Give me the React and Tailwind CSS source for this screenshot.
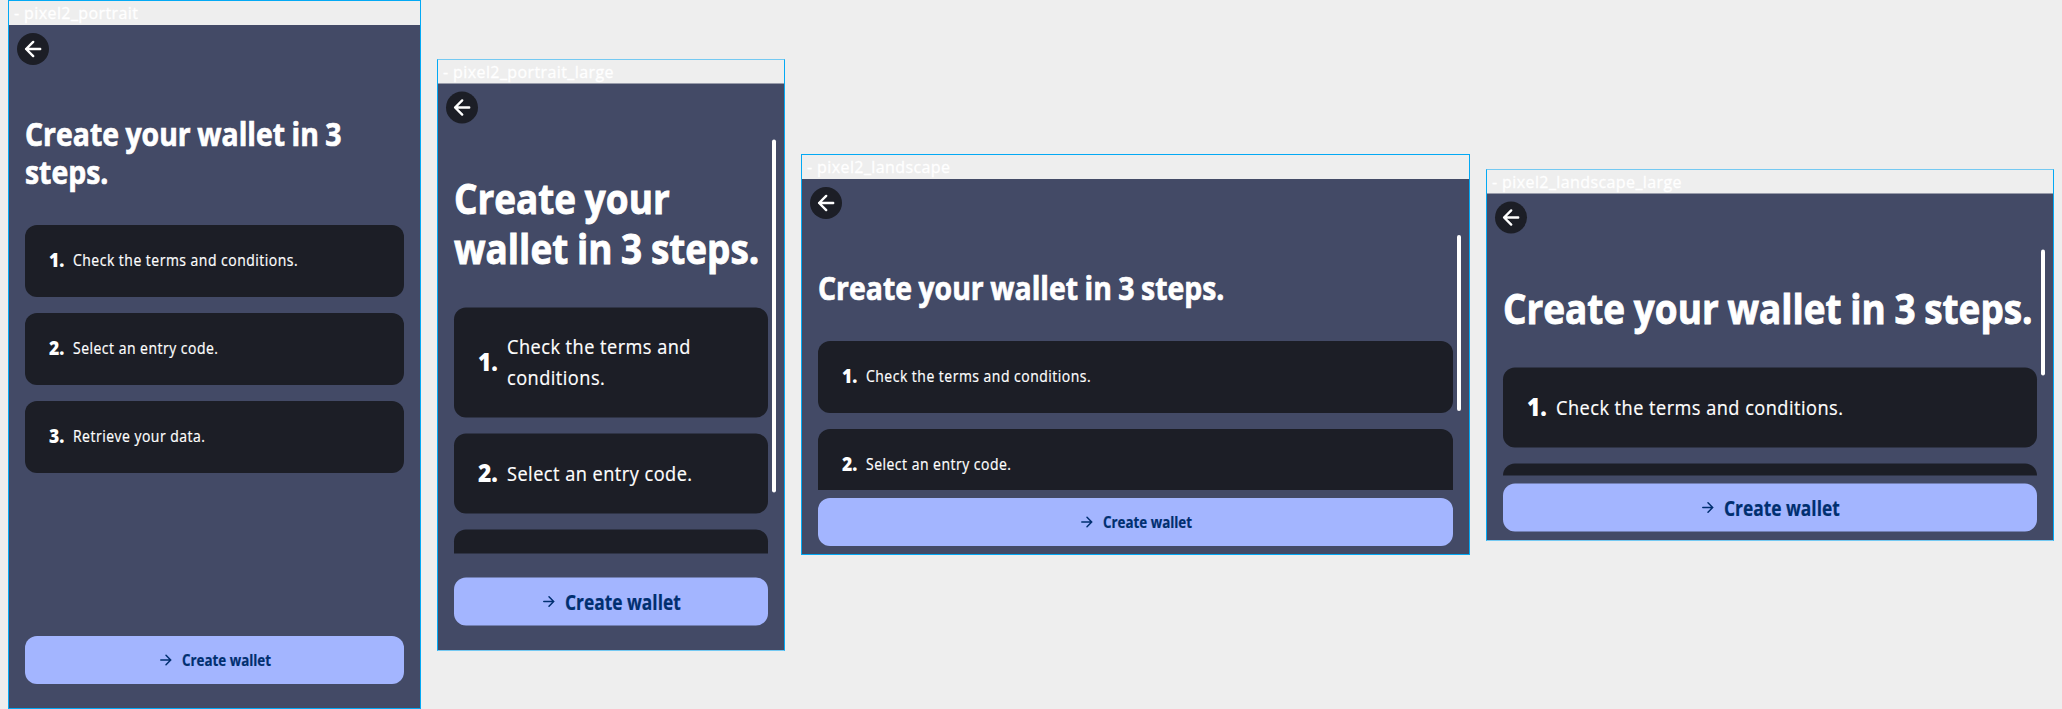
import React from 'react';

const STEPS = ['Check the terms and conditions.', 'Select an entry code.', 'Retrieve your data.'];

const SIZES = {
  regular: {
    offset: '',
    label: 'h-6',
    heading: 'mt-[34px] mb-[34px] text-[32px] leading-[38px] [word-spacing:-1px] [-webkit-text-stroke:0.7px_white]',
    number: 'w-6 text-[18.5px] leading-6',
    step: 'text-[16px] leading-6 tracking-[0.57px] [-webkit-text-stroke:0.2px_white]',
    button: 'w-[89px] text-[16px] leading-6',
    edge: 'border-y-[#03a9f4]',
  },
  large: {
    offset: 'translate-y-[0.5px]',
    label: 'h-[23px]',
    heading: 'mt-[33px] mb-[35px] text-[41.6px] leading-[50px] [word-spacing:-1px] [-webkit-text-stroke:0.9px_white]',
    number: 'w-[29px] text-[24px] leading-8',
    step: 'text-[20.8px] leading-[31px] tracking-[0.55px] [-webkit-text-stroke:0.2px_white]',
    button: 'w-[115.5px] text-[20.8px] leading-8',
    edge: 'border-y-[#74c9f2]',
  },
};

const DEVICES = [
  { name: 'pixel2_portrait', size: 'regular', frame: 'w-[413px] h-[709px]', footer: 'py-6', bar: null },
  { name: 'pixel2_portrait_large', size: 'large', frame: 'w-[348px] h-[592px] mb-[-1px]', footer: 'pt-6 pb-[25px]', bar: 'h-[353px]' },
  { name: 'pixel2_landscape', size: 'regular', frame: 'w-[669px] h-[401px]', footer: 'py-2', bar: 'h-[176px]' },
  { name: 'pixel2_landscape_large', size: 'large', frame: 'w-[568px] h-[372px] mb-[-1px]', footer: 'pt-2 pb-[9px]', bar: 'h-[126px]' },
];

function BackIcon() {
  return (
    <svg className="size-5" viewBox="0 0 20 20" fill="none" stroke="currentColor" strokeWidth="2.4" strokeLinecap="round" strokeLinejoin="round">
      <path d="M10.2 2.9 3.1 10l7.1 7.1M3.1 10h14.1" />
    </svg>
  );
}

function ForwardIcon() {
  return (
    <svg className="size-4 shrink-0" viewBox="0 0 16 16" fill="none" stroke="currentColor" strokeWidth="1.5" strokeLinecap="round" strokeLinejoin="round">
      <path d="M2.8 8h10M8 3.3 12.7 8 8 12.7" />
    </svg>
  );
}

function Device({ name, size, frame, footer, bar }) {
  const s = SIZES[size];
  return (
    <section className={`flex shrink-0 flex-col overflow-hidden border border-x-[#03a9f4] ${s.edge} ${frame}`}>
      <p className={`shrink-0 pl-[5px] text-[16px] leading-[24px] font-medium tracking-[0.4px] text-white [-webkit-text-stroke:0.3px_white] ${s.label}`}>- {name}</p>
      <div className={`relative flex min-h-0 flex-1 flex-col bg-[#434a66] ${s.offset}`}>
        <header className="flex h-14 shrink-0 items-start p-2">
          <button className="flex size-8 items-center justify-center rounded-full bg-[#1c1e26] text-white">
            <BackIcon />
          </button>
        </header>
        <main className="min-h-0 flex-1 overflow-hidden px-4">
          <h1 className={`w-[113%] origin-left scale-x-[0.887] font-bold text-white ${s.heading}`}>Create your wallet in 3 steps.</h1>
          <ol className="flex flex-col gap-4">
            {STEPS.map((step, i) => (
              <li key={step} className="flex items-center rounded-xl bg-[#1c1e26] p-6 text-white">
                <span className={`shrink-0 origin-left -translate-y-px scale-x-[0.95] font-extrabold ${s.number}`}>{i + 1}.</span>
                <div className="min-w-0 flex-1">
                  <p className={`w-[115%] origin-left -translate-y-px scale-x-[0.873] font-medium ${s.step}`}>{step}</p>
                </div>
              </li>
            ))}
          </ol>
        </main>
        <footer className={`shrink-0 px-4 ${footer}`}>
          <button className="flex h-12 w-full items-center justify-center gap-2 rounded-xl bg-[#a3b5ff] text-left text-[#002f70]">
            <ForwardIcon />
            <span className={`origin-left scale-x-[0.835] font-bold whitespace-nowrap [-webkit-text-stroke:0.2px_#002f70] ${s.button}`}>Create wallet</span>
          </button>
        </footer>
        {bar && <div className={`absolute top-14 right-2 w-1 rounded-full bg-white ${bar}`} />}
      </div>
    </section>
  );
}

export default function App() {
  return (
    <div className="flex h-[709px] w-[2062px] items-center gap-4 overflow-hidden bg-[#eeeeee] px-2 font-['Open_Sans',sans-serif]">
      {DEVICES.map((d) => (
        <Device key={d.name} {...d} />
      ))}
    </div>
  );
}
